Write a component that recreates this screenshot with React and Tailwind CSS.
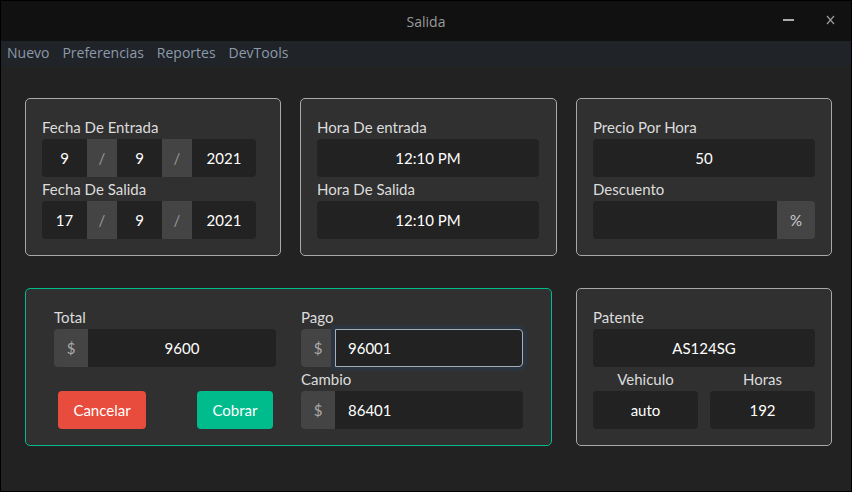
import React from "react";

const Label = ({ children, className = "" }) => (
  <div className={`text-[15px] leading-[22px] text-[#dcdcdc] ${className}`}>{children}</div>
);

const Box = ({ children, className = "" }) => (
  <div className={`h-[38px] rounded-[4px] bg-[#222222] flex items-center justify-center text-[15px] text-white ${className}`}>
    {children}
  </div>
);

const DateRow = ({ d, m, y }) => (
  <div className="flex h-[38px] w-[214px] rounded-[4px] overflow-hidden bg-[#222222] text-[15px] text-white">
    <div className="w-[45px] flex items-center justify-center">{d}</div>
    <div className="w-[30px] flex items-center justify-center bg-[#444444] text-[#999999]">/</div>
    <div className="w-[45px] flex items-center justify-center">{m}</div>
    <div className="w-[30px] flex items-center justify-center bg-[#444444] text-[#999999]">/</div>
    <div className="w-[64px] flex items-center justify-center">{y}</div>
  </div>
);

const Card = ({ children, className = "", green }) => (
  <div
    className={`h-[158px] rounded-[5px] bg-[#303030] border pt-[17px] pb-[14px] ${
      green ? "border-[#00bc8c]" : "border-[#a8a8a8]"
    } ${className}`}
  >
    {children}
  </div>
);

const Money = ({ value, focused, center }) => (
  <div className="flex h-[38px] w-[222px]">
    <div className="w-[34px] rounded-l-[4px] bg-[#444444] text-[#aaaaaa] text-[15px] flex items-center justify-center">
      $
    </div>
    {focused ? (
      <div className="flex-1 rounded-r-[4px] bg-[#222222] border border-[#a5aebb] shadow-[0_0_0_4px_#2c3440] flex items-center pl-[12px] text-[15px] text-white">
        {value}
      </div>
    ) : (
      <div
        className={`flex-1 rounded-r-[4px] bg-[#222222] flex items-center text-[15px] text-white ${
          center ? "justify-center" : "pl-[13px]"
        }`}
      >
        {value}
      </div>
    )}
  </div>
);

export default function App() {
  return (
    <div className="w-[852px] h-[492px] border border-black bg-[#222222] flex flex-col overflow-hidden font-['Lato','Liberation_Sans',sans-serif]">
      {/* title bar */}
      <div className="relative h-[40px] bg-[#111111] flex items-center justify-center font-['Open_Sans',sans-serif] text-[14px] text-[#9a9a9a]">
        <span>Salida</span>
        <div className="absolute left-[782px] top-[18px] w-[11px] h-[1.5px] bg-[#aaaaaa]" />
        <svg className="absolute left-[825px] top-[14px]" width="9" height="10" viewBox="0 0 9 10">
          <path d="M1 1 L8 9 M8 1 L1 9" stroke="#9a9a9a" strokeWidth="1.2" fill="none" />
        </svg>
      </div>
      {/* menu bar */}
      <div className="h-[25px] bg-[#202327] flex items-center gap-[13px] pl-[6px] pb-[2px] font-['Open_Sans',sans-serif] text-[14px] text-[#8d9aab]">
        <span>Nuevo</span>
        <span>Preferencias</span>
        <span>Reportes</span>
        <span>DevTools</span>
      </div>

      <div className="flex-1 pl-[24px] pt-[32px] flex flex-col gap-[32px]">
        <div className="flex gap-[19px]">
          <Card className="w-[256px] pl-[16px]">
            <Label className="mb-[1px]">Fecha De Entrada</Label>
            <DateRow d="9" m="9" y="2021" />
            <Label className="mt-[1px] mb-[1px]">Fecha De Salida</Label>
            <DateRow d="17" m="9" y="2021" />
          </Card>
          <Card className="w-[257px] pl-[16px]">
            <Label className="mb-[1px]">Hora De entrada</Label>
            <Box className="w-[222px]">12:10 PM</Box>
            <Label className="mt-[1px] mb-[1px]">Hora De Salida</Label>
            <Box className="w-[222px]">12:10 PM</Box>
          </Card>
          <Card className="w-[256px] pl-[16px]">
            <Label className="mb-[1px]">Precio Por Hora</Label>
            <Box className="w-[222px]">50</Box>
            <Label className="mt-[1px] mb-[1px]">Descuento</Label>
            <div className="flex w-[222px] h-[38px]">
              <div className="flex-1 rounded-l-[4px] bg-[#222222]" />
              <div className="w-[38px] rounded-r-[4px] bg-[#444444] text-[#cccccc] text-[15px] flex items-center justify-center">
                %
              </div>
            </div>
          </Card>
        </div>

        <div className="flex gap-[24px]">
          <Card green className="w-[527px] pl-[28px] flex gap-[25px]">
            <div className="w-[222px]">
              <Label className="mb-[1px]">Total</Label>
              <Money value="9600" center />
              <div className="h-[24px]" />
              <div className="flex gap-[51px] pl-[4px]">
                <button className="w-[88px] h-[38px] rounded-[4px] bg-[#e74c3c] text-white text-[15px]">Cancelar</button>
                <button className="w-[76px] h-[38px] rounded-[4px] bg-[#00bc8c] text-white text-[15px]">Cobrar</button>
              </div>
            </div>
            <div className="w-[222px]">
              <Label className="mb-[1px]">Pago</Label>
              <Money value="96001" focused />
              <Label className="mt-[1px] mb-[1px]">Cambio</Label>
              <Money value="86401" />
            </div>
          </Card>
          <Card className="w-[256px] pl-[16px]">
            <Label className="mb-[1px]">Patente</Label>
            <Box className="w-[222px]">AS124SG</Box>
            <div className="flex gap-[12px] w-[222px]">
              <div className="w-[105px]">
                <Label className="mt-[1px] mb-[1px] text-center">Vehiculo</Label>
                <Box>auto</Box>
              </div>
              <div className="w-[105px]">
                <Label className="mt-[1px] mb-[1px] text-center">Horas</Label>
                <Box>192</Box>
              </div>
            </div>
          </Card>
        </div>
      </div>
    </div>
  );
}
